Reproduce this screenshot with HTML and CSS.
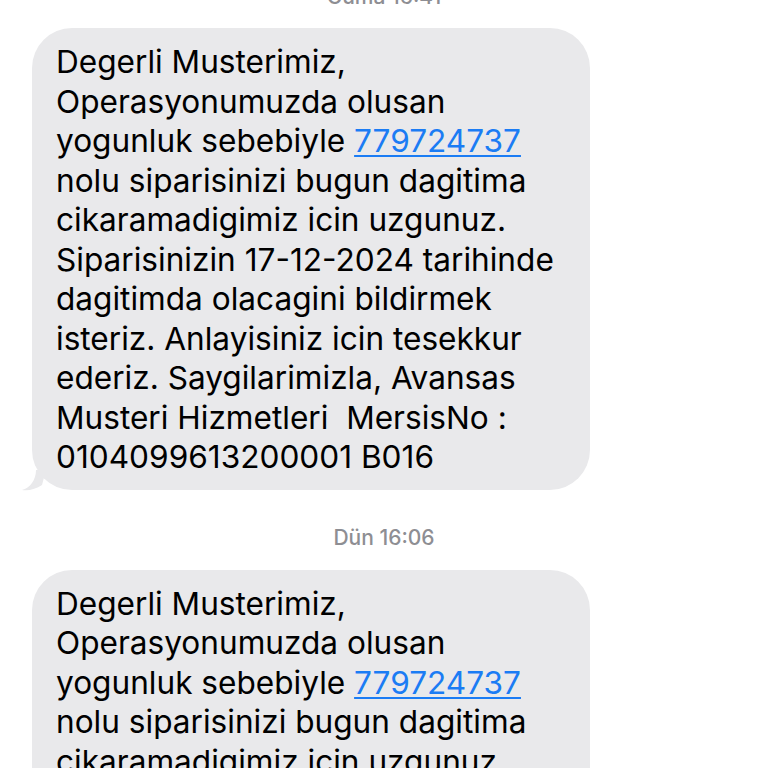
FILE: index.html
```html
<!DOCTYPE html>
<html lang="tr">
<head>
<meta charset="utf-8">
<link rel="stylesheet" href="styles.css">
</head>
<body>
<div class="thread">
  <div class="stamp stamp-top">Cuma 16:41</div>
  <div class="bubble">
    <p class="msg">Degerli Musterimiz,<br>Operasyonumuzda olusan<br>yogunluk sebebiyle <a class="link">779724737</a><br>nolu siparisinizi bugun dagitima<br>cikaramadigimiz icin uzgunuz.<br>Siparisinizin 17-12-2024 tarihinde<br>dagitimda olacagini bildirmek<br>isteriz. Anlayisiniz icin tesekkur<br>ederiz. Saygilarimizla, Avansas<br>Musteri Hizmetleri&nbsp; MersisNo :<br>0104099613200001 B016</p>
    <svg class="tail" width="24" height="22" viewBox="0 0 24 22"><path d="M14 0 C14 10 8 18 0 20 C7 21 14 19 20 15 L24 0 Z" fill="#e9e9eb"/></svg>
  </div>
  <div class="stamp">Dün 16:06</div>
  <div class="bubble">
    <p class="msg">Degerli Musterimiz,<br>Operasyonumuzda olusan<br>yogunluk sebebiyle <a class="link">779724737</a><br>nolu siparisinizi bugun dagitima<br>cikaramadigimiz icin uzgunuz.<br>Siparisinizin 17-12-2024 tarihinde<br>dagitimda olacagini bildirmek<br>isteriz. Anlayisiniz icin tesekkur<br>ederiz. Saygilarimizla, Avansas<br>Musteri Hizmetleri&nbsp; MersisNo :<br>0104099613200001 B016</p>
  </div>
</div>
</body>
</html>
```
FILE: styles.css
```css
html, body {
  margin: 0;
  padding: 0;
  background: #ffffff;
}
body {
  width: 768px;
  height: 768px;
  overflow: hidden;
  font-family: Inter, "Noto Sans", sans-serif;
}
.thread {
  display: flex;
  flex-direction: column;
  align-items: flex-start;
  margin-top: -15px;
}
.stamp {
  align-self: stretch;
  text-align: center;
  color: #8e8e93;
  font-size: 21px;
  font-weight: 500;
  line-height: 24px;
  margin: 36px 0 20px;
}
.stamp-top {
  margin: 0 0 19px;
}
.bubble {
  position: relative;
  margin-left: 32px;
  width: 558px;
  box-sizing: border-box;
  background: #e9e9eb;
  border-radius: 40px;
  padding: 14px 16px 13px 24px;
}
.msg {
  margin: 0;
  font-size: 31.6px;
  line-height: 39.5px;
  color: #000;
  white-space: nowrap;
}
.link {
  color: #1b7cf4;
  text-decoration: underline;
  text-decoration-thickness: 1.5px;
  text-underline-offset: 3px;
}
.tail {
  position: absolute;
  left: -10px;
  bottom: -2px;
}
```
